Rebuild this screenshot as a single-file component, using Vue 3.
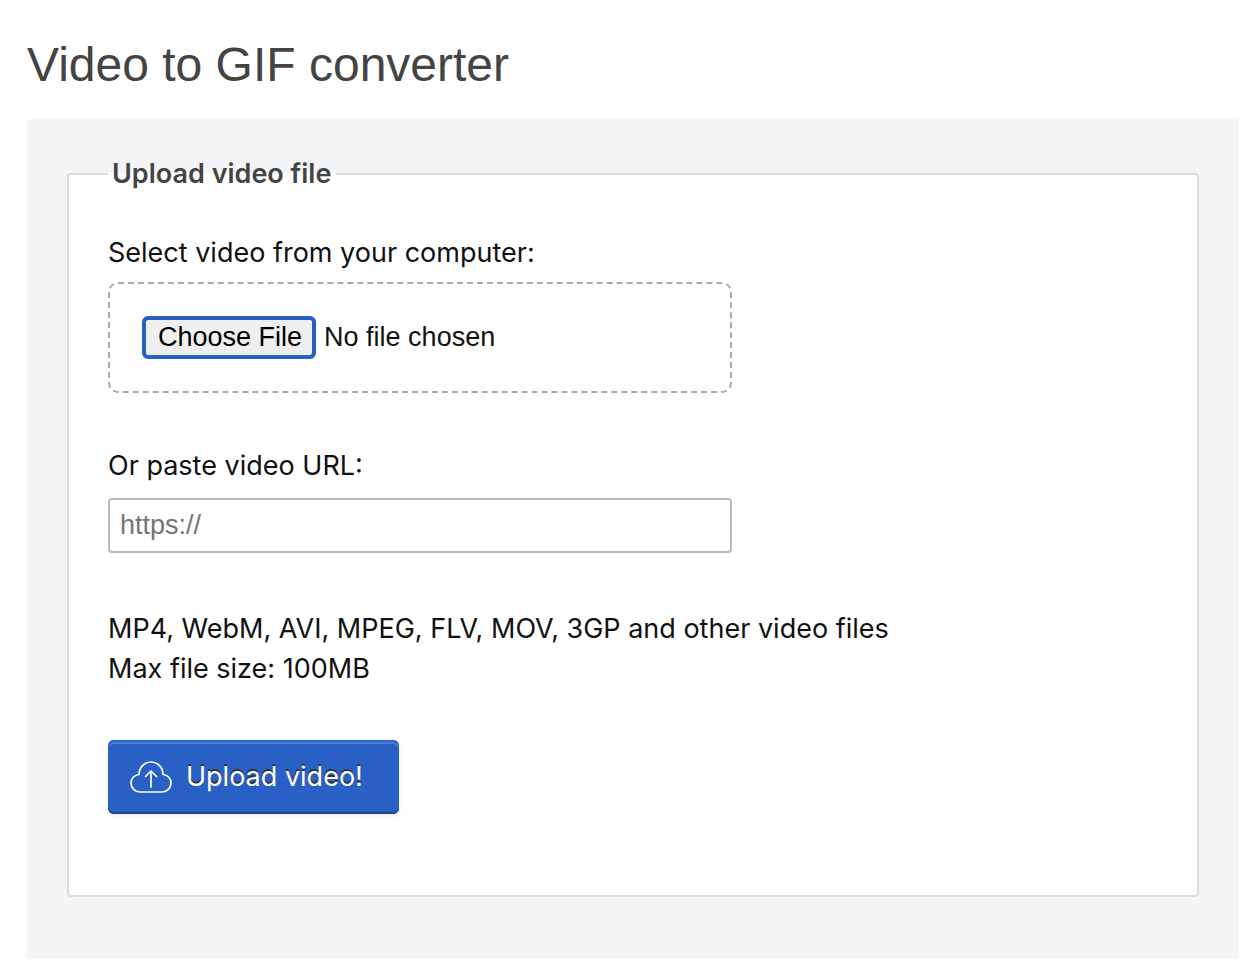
<script setup>
import { ref } from 'vue'

const url = ref('')
</script>

<template>
  <main class="page">
    <h1 class="title">Video to GIF converter</h1>
    <form class="panel" @submit.prevent>
      <fieldset class="group">
        <legend class="legend">Upload video file</legend>

        <div class="field">
          <label class="label" for="new-image">Select video from your computer:</label>
          <input id="new-image" class="file" type="file" accept="video/*" />
        </div>

        <div class="field">
          <label class="label" for="new-image-url">Or paste video URL:</label>
          <input id="new-image-url" v-model="url" class="url" type="text" placeholder="https://" />
        </div>

        <p class="hint">
          MP4, WebM, AVI, MPEG, FLV, MOV, 3GP and other video files<br />
          Max file size: 100MB
        </p>

        <button class="upload" type="submit">
          <svg class="cloud" viewBox="0 0 42 32" aria-hidden="true">
            <path d="M10 31 A9 9 0 0 1 1 22 C1 17.5 4.200 14 9 13.500 A12 12.500 0 0 1 33 13.500 C37.800 14 41 17.500 41 22 A9 9 0 0 1 32 31 Z" />
            <path d="M21 26 V10 M15.500 15.500 L21 10 L26.500 15.500" />
          </svg>
          <span>Upload video!</span>
        </button>
      </fieldset>
    </form>
  </main>
</template>

<style>
body {
  margin: 0;
  background: #fff;
}
</style>

<style scoped>
.page {
  padding: 32px 11px 17px 27px;
  color: #111;
  font-family: Inter, "Liberation Sans", sans-serif;
  font-size: 27px;
  line-height: 40px;
}

.title {
  margin: 0 0 21px;
  color: #444;
  font-family: "Liberation Sans", Arial, sans-serif;
  font-size: 48px;
  font-weight: 400;
  line-height: 66px;
}

.panel {
  padding: 40px 40px 62px;
  border-radius: 4px;
  background: #f4f5f7;
}

.group {
  min-width: 0;
  margin: 0;
  padding: 45px 39px 81px;
  border: 2px solid #ddd;
  border-radius: 4px;
  background: #fff;
}

.legend {
  padding: 0 5px 0 4px;
  color: #444;
  font-weight: 600;
  line-height: 29px;
}

.field {
  display: flex;
  flex-direction: column;
  gap: 9px;
  max-width: 624px;
  margin-bottom: 53px;
}

.field + .field {
  gap: 12px;
  margin-bottom: 56px;
}

.file {
  box-sizing: border-box;
  width: 100%;
  padding: 32px;
  border: 2px dashed #aaa;
  border-radius: 10px;
  color: #111;
  font-family: "Liberation Sans", Arial, sans-serif;
  font-size: 27px;
  line-height: 35px;
}

.file::file-selector-button {
  box-sizing: border-box;
  height: 43px;
  margin: 0 8px 0 0;
  padding: 0 10px 0 12px;
  border: 4px solid #2860c6;
  border-radius: 6px;
  background: #efefef;
  color: #000;
  font: inherit;
}

.url {
  box-sizing: border-box;
  width: 100%;
  height: 55px;
  padding: 0 10px;
  border: 2px solid #bbb;
  border-radius: 4px;
  background: #fff;
  color: #111;
  font-family: "Liberation Sans", Arial, sans-serif;
  font-size: 27px;
}

.url::placeholder {
  color: #757575;
}

.hint {
  margin: 0 0 51px;
}

.upload {
  display: flex;
  align-items: center;
  gap: 14px;
  height: 74px;
  padding: 0 36px 0 22px;
  border: 0;
  border-radius: 6px;
  background: #2860c6;
  box-shadow: inset 0 2px #2860c6, inset 0 4px #4c7bd0, inset 0 -2px #1c438b, 0 2px 4px rgba(0, 0, 0, 0.08);
  color: #fff;
  font: inherit;
  text-shadow: 0 -2px #333;
}

.cloud {
  width: 42px;
  height: 32px;
  fill: none;
  stroke: #fff;
  stroke-width: 1.7;
  stroke-linecap: round;
  stroke-linejoin: round;
}
</style>
